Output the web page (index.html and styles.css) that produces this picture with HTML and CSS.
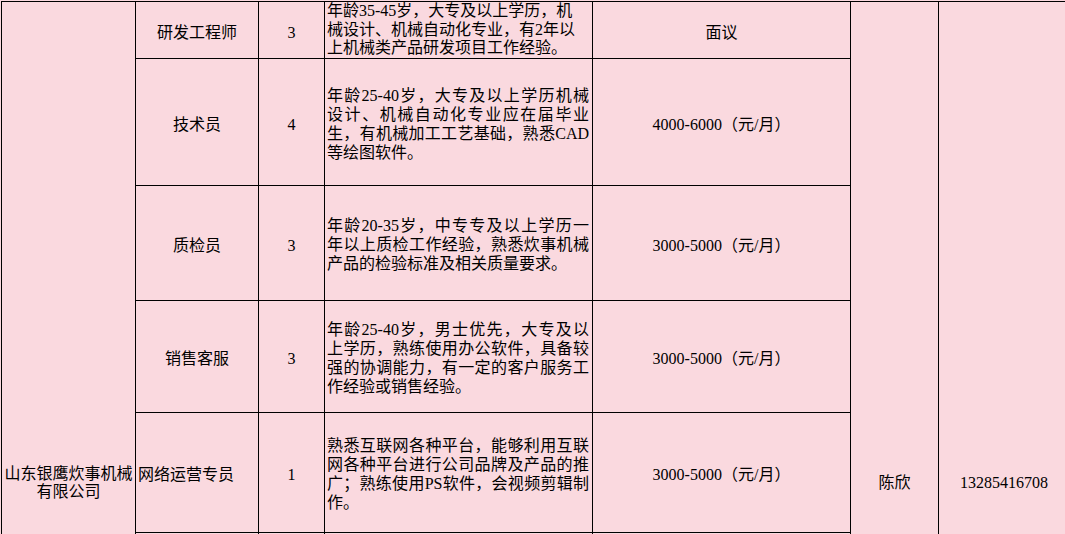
FILE: index.html
```html
<!DOCTYPE html>
<html lang="zh-CN">
<head>
<meta charset="utf-8">
<title>招聘信息</title>
<link rel="stylesheet" href="styles.css">
</head>
<body>
<div class="sheet">
  <div class="cell span-all col-company company">山东银鹰炊事机械<br>有限公司</div>

  <div class="cell">研发工程师</div>
  <div class="cell">3</div>
  <div class="cell req req-top">
    <div class="ln">年龄35-45岁，大专及以上学历，机</div>
    <div class="ln">械设计、机械自动化专业，有2年以</div>
    <div class="ln">上机械类产品研发项目工作经验。</div>
  </div>
  <div class="cell">面议</div>
  <div class="cell span-all col-contact">陈欣</div>
  <div class="cell span-all col-phone">13285416708</div>

  <div class="cell">技术员</div>
  <div class="cell">4</div>
  <div class="cell req">
    <div class="ln just">年龄25-40岁，大专及以上学历机械</div>
    <div class="ln just">设计、机械自动化专业应在届毕业</div>
    <div class="ln just">生，有机械加工工艺基础，熟悉CAD</div>
    <div class="ln">等绘图软件。</div>
  </div>
  <div class="cell">4000-6000（元/月）</div>

  <div class="cell">质检员</div>
  <div class="cell">3</div>
  <div class="cell req">
    <div class="ln just">年龄20-35岁，中专专及以上学历一</div>
    <div class="ln just">年以上质检工作经验，熟悉炊事机械</div>
    <div class="ln">产品的检验标准及相关质量要求。</div>
  </div>
  <div class="cell">3000-5000（元/月）</div>

  <div class="cell">销售客服</div>
  <div class="cell">3</div>
  <div class="cell req">
    <div class="ln just">年龄25-40岁，男士优先，大专及以</div>
    <div class="ln just">上学历，熟练使用办公软件，具备较</div>
    <div class="ln just">强的协调能力，有一定的客户服务工</div>
    <div class="ln">作经验或销售经验。</div>
  </div>
  <div class="cell">3000-5000（元/月）</div>

  <div class="cell left">网络运营专员</div>
  <div class="cell">1</div>
  <div class="cell req">
    <div class="ln just">熟悉互联网各种平台，能够利用互联</div>
    <div class="ln just">网各种平台进行公司品牌及产品的推</div>
    <div class="ln just">广；熟练使用PS软件，会视频剪辑制</div>
    <div class="ln">作。</div>
  </div>
  <div class="cell">3000-5000（元/月）</div>

  <div class="cell"></div>
  <div class="cell"></div>
  <div class="cell"></div>
  <div class="cell"></div>
</div>
</body>
</html>
```

FILE: styles.css
```css
html, body {
  margin: 0;
  overflow: hidden;
  background: #fad9df;
}

body {
  width: 1065px;
  height: 534px;
  padding: 1px 0 0 1px;
  box-sizing: border-box;
  font-family: "Liberation Serif", "Noto Sans CJK SC", serif;
  font-size: 16px;
  line-height: 19px;
  color: #000;
}

.sheet {
  display: grid;
  grid-template-columns: 133px 122px 65px 267px 257px 87px 130px;
  grid-template-rows: 56px 126px 114px 111px 119px 430px;
  gap: 1px;
  padding: 1px;
  background: #000;
  width: max-content;
}

.cell {
  background: #fad9df;
  display: flex;
  align-items: center;
  justify-content: center;
  text-align: center;
  padding: 4px 2px 0;
  box-sizing: border-box;
  white-space: nowrap;
  overflow: hidden;
}

.span-all {
  grid-row: 1 / span 6;
  padding-top: 0;
}

.col-company {
  grid-column: 1;
}

.col-contact {
  grid-column: 6;
}

.col-phone {
  grid-column: 7;
}

.company {
  line-height: 18px;
}

.left {
  justify-content: flex-start;
  padding-left: 2px;
}

.req {
  flex-direction: column;
  align-items: stretch;
  justify-content: center;
  text-align: left;
  padding: 3px 3px 0 2px;
}

.req-top {
  justify-content: flex-start;
  padding-top: 0;
  line-height: 18.7px;
}

.ln {
  text-align: left;
}

.just {
  text-align: justify;
  text-align-last: justify;
}
```
